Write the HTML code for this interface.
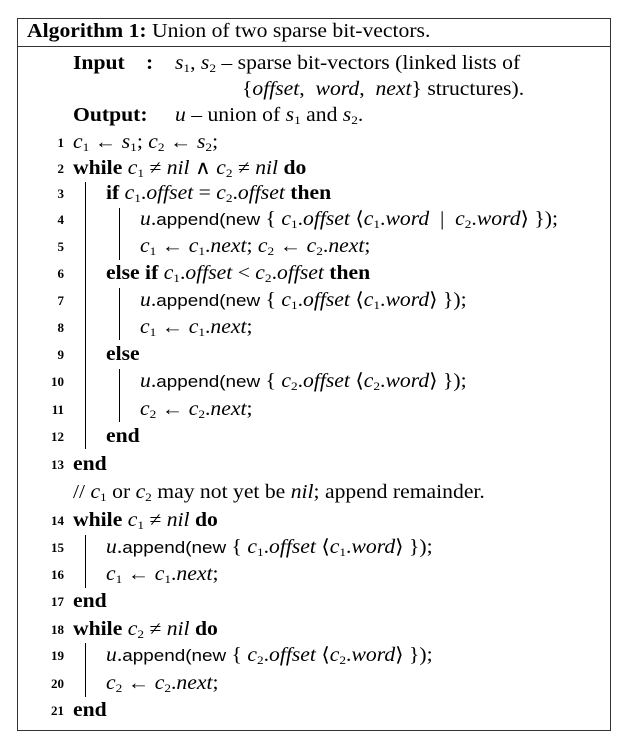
<!DOCTYPE html>
<html><head><meta charset="utf-8"><style>
body{margin:0;width:622px;height:741px;background:#fff;position:relative;font-family:"Liberation Serif",serif;color:#000;overflow:hidden}
.box{position:absolute;left:17px;top:18px;width:594px;height:713px;border:1.3px solid #333;box-sizing:border-box}
.sep{position:absolute;left:17px;top:46px;width:594px;height:1.3px;background:#333}
.l{position:absolute;font-size:19.5px;line-height:26px;white-space:nowrap;transform:scaleX(1.11);transform-origin:0 50%}
.n{position:absolute;width:30px;left:34px;text-align:right;font-size:13px;font-weight:bold;line-height:26px}
.b{font-weight:bold}
i{font-style:italic}
.s{font-family:"Liberation Sans",sans-serif;font-size:17px}
sub{font-size:12px;vertical-align:-3px;line-height:0}
.bar{position:absolute;width:1.3px;background:#000}
</style></head><body>
<div class="box"></div><div class="sep"></div>
<div class="l" style="left:27px;top:19px"><span class="b">Algorithm 1:</span> Union of two sparse bit-vectors.</div>
<div class="l" style="left:73px;top:51px"><span class="b">Input</span></div>
<div class="l" style="left:146px;top:51px"><span class="b">:</span></div>
<div class="l" style="left:175px;top:51px"><i>s</i><sub>1</sub>, <i>s</i><sub>2</sub> – sparse bit-vectors (linked lists of</div>
<div class="l" style="left:242px;top:77px">{<i>offset</i>, &nbsp;<i>word</i>, &nbsp;<i>next</i>} structures).</div>
<div class="l" style="left:73px;top:103px"><span class="b">Output:</span></div>
<div class="l" style="left:175px;top:103px"><i>u</i> – union of <i>s</i><sub>1</sub> and <i>s</i><sub>2</sub>.</div>

<div class="n" style="top:130px">1</div><div class="l" style="left:73px;top:130px"><i>c</i><sub>1</sub> ← <i>s</i><sub>1</sub>; <i>c</i><sub>2</sub> ← <i>s</i><sub>2</sub>;</div>
<div class="n" style="top:156px">2</div><div class="l" style="left:73px;top:156px"><span class="b">while</span> <i>c</i><sub>1</sub> ≠ <i>nil</i> ∧ <i>c</i><sub>2</sub> ≠ <i>nil</i> <span class="b">do</span></div>
<div class="n" style="top:181px">3</div><div class="l" style="left:106px;top:181px"><span class="b">if</span> <i>c</i><sub>1</sub>.<i>offset</i> = <i>c</i><sub>2</sub>.<i>offset</i> <span class="b">then</span></div>
<div class="n" style="top:207px">4</div><div class="l" style="left:140px;top:207px"><i>u</i>.<span class="s">append(new</span> { <i>c</i><sub>1</sub>.<i>offset</i> ⟨<i>c</i><sub>1</sub>.<i>word</i> &nbsp;| &nbsp;<i>c</i><sub>2</sub>.<i>word</i>⟩ });</div>
<div class="n" style="top:234px">5</div><div class="l" style="left:140px;top:234px"><i>c</i><sub>1</sub> ← <i>c</i><sub>1</sub>.<i>next</i>; <i>c</i><sub>2</sub> ← <i>c</i><sub>2</sub>.<i>next</i>;</div>
<div class="n" style="top:261px">6</div><div class="l" style="left:106px;top:261px"><span class="b">else if</span> <i>c</i><sub>1</sub>.<i>offset</i> &lt; <i>c</i><sub>2</sub>.<i>offset</i> <span class="b">then</span></div>
<div class="n" style="top:288px">7</div><div class="l" style="left:140px;top:288px"><i>u</i>.<span class="s">append(new</span> { <i>c</i><sub>1</sub>.<i>offset</i> ⟨<i>c</i><sub>1</sub>.<i>word</i>⟩ });</div>
<div class="n" style="top:315px">8</div><div class="l" style="left:140px;top:315px"><i>c</i><sub>1</sub> ← <i>c</i><sub>1</sub>.<i>next</i>;</div>
<div class="n" style="top:342px">9</div><div class="l" style="left:106px;top:342px"><span class="b">else</span></div>
<div class="n" style="top:369px">10</div><div class="l" style="left:140px;top:369px"><i>u</i>.<span class="s">append(new</span> { <i>c</i><sub>2</sub>.<i>offset</i> ⟨<i>c</i><sub>2</sub>.<i>word</i>⟩ });</div>
<div class="n" style="top:397px">11</div><div class="l" style="left:140px;top:397px"><i>c</i><sub>2</sub> ← <i>c</i><sub>2</sub>.<i>next</i>;</div>
<div class="n" style="top:424px">12</div><div class="l" style="left:106px;top:424px"><span class="b">end</span></div>
<div class="n" style="top:452px">13</div><div class="l" style="left:73px;top:452px"><span class="b">end</span></div>
<div class="l" style="left:73px;top:480px">// <i>c</i><sub>1</sub> or <i>c</i><sub>2</sub> may not yet be <i>nil</i>; append remainder.</div>
<div class="n" style="top:508px">14</div><div class="l" style="left:73px;top:508px"><span class="b">while</span> <i>c</i><sub>1</sub> ≠ <i>nil</i> <span class="b">do</span></div>
<div class="n" style="top:535px">15</div><div class="l" style="left:106px;top:535px"><i>u</i>.<span class="s">append(new</span> { <i>c</i><sub>1</sub>.<i>offset</i> ⟨<i>c</i><sub>1</sub>.<i>word</i>⟩ });</div>
<div class="n" style="top:562px">16</div><div class="l" style="left:106px;top:562px"><i>c</i><sub>1</sub> ← <i>c</i><sub>1</sub>.<i>next</i>;</div>
<div class="n" style="top:589px">17</div><div class="l" style="left:73px;top:589px"><span class="b">end</span></div>
<div class="n" style="top:617px">18</div><div class="l" style="left:73px;top:617px"><span class="b">while</span> <i>c</i><sub>2</sub> ≠ <i>nil</i> <span class="b">do</span></div>
<div class="n" style="top:643px">19</div><div class="l" style="left:106px;top:643px"><i>u</i>.<span class="s">append(new</span> { <i>c</i><sub>2</sub>.<i>offset</i> ⟨<i>c</i><sub>2</sub>.<i>word</i>⟩ });</div>
<div class="n" style="top:671px">20</div><div class="l" style="left:106px;top:671px"><i>c</i><sub>2</sub> ← <i>c</i><sub>2</sub>.<i>next</i>;</div>
<div class="n" style="top:698px">21</div><div class="l" style="left:73px;top:698px"><span class="b">end</span></div>

<div class="bar" style="left:85px;top:182px;height:267px"></div>
<div class="bar" style="left:119px;top:208px;height:52px"></div>
<div class="bar" style="left:119px;top:288px;height:52px"></div>
<div class="bar" style="left:119px;top:369px;height:53px"></div>
<div class="bar" style="left:85px;top:535px;height:53px"></div>
<div class="bar" style="left:85px;top:643px;height:54px"></div>
</body></html>
